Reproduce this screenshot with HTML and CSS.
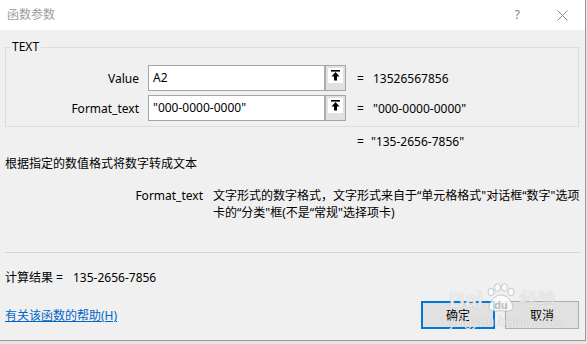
FILE: index.html
```html
<!DOCTYPE html>
<html lang="zh-CN">
<head>
<meta charset="utf-8">
<title>函数参数</title>
<link rel="stylesheet" href="styles.css">
</head>
<body>
<div class="dialog">
  <div class="titlebar">
    <span class="title">函数参数</span>
    <span class="help">?</span>
    <svg class="close" width="11" height="11" viewBox="0 0 11 11"><path d="M0.5 0.5 L10.5 10.5 M10.5 0.5 L0.5 10.5" stroke="#8a8a8a" stroke-width="1" fill="none"/></svg>
  </div>
  <div class="content">
    <fieldset class="group">
      <legend>TEXT</legend>
      <div class="args">
        <label class="arg-label">Value</label>
        <div class="input">
          <span class="input-text">A2</span>
          <span class="pick"><span class="pick-face"><svg width="11" height="11" viewBox="0 0 11 11"><rect x="1" y="0" width="9" height="1.6" fill="#000"/><path d="M5.5 2 L9.5 6.5 L7 6.5 L7 10.5 L4 10.5 L4 6.5 L1.5 6.5 Z" fill="#000"/></svg></span></span>
        </div>
        <span class="eq">=</span>
        <span class="res">13526567856</span>

        <label class="arg-label">Format_text</label>
        <div class="input">
          <span class="input-text">"000-0000-0000"</span>
          <span class="pick"><span class="pick-face"><svg width="11" height="11" viewBox="0 0 11 11"><rect x="1" y="0" width="9" height="1.6" fill="#000"/><path d="M5.5 2 L9.5 6.5 L7 6.5 L7 10.5 L4 10.5 L4 6.5 L1.5 6.5 Z" fill="#000"/></svg></span></span>
        </div>
        <span class="eq">=</span>
        <span class="res">"000-0000-0000"</span>
      </div>
    </fieldset>

    <div class="result-line"><span class="eq">=</span><span class="res">"135-2656-7856"</span></div>

    <p class="desc">根据指定的数值格式将数字转成文本</p>

    <div class="argdesc">
      <span class="argname">Format_text</span>
      <span class="argtext">文字形式的数字格式，文字形式来自于“单元格格式"对话框“数字"选项<br>卡的“分类"框(不是“常规"选择项卡)</span>
    </div>

    <div class="sep"></div>

    <div class="calc">计算结果 =<span class="calc-val">135-2656-7856</span></div>

    <div class="footer">
      <a class="helplink" href="#">有关该函数的帮助(H)</a>
      <div class="buttons">
        <button class="btn btn-primary">确定</button>
        <button class="btn">取消</button>
      </div>
    </div>
  </div>
  <div class="watermark">
    <div class="wm-row">
      <span class="wm-big">Bai</span>
      <svg class="wm-paw" width="30" height="30" viewBox="0 0 30 30">
        <g fill="rgba(255,255,255,0.75)" stroke="rgba(160,160,160,0.55)" stroke-width="1">
          <ellipse cx="5" cy="9" rx="3" ry="3.8"/>
          <ellipse cx="11.5" cy="4.5" rx="3" ry="3.8"/>
          <ellipse cx="18.5" cy="4.5" rx="3" ry="3.8"/>
          <ellipse cx="25" cy="9" rx="3" ry="3.8"/>
          <path d="M15 12 C9 12 3 19 3 24 C3 28 8 29 15 27.5 C22 29 27 28 27 24 C27 19 21 12 15 12 Z"/>
        </g>
        <text x="15" y="26" text-anchor="middle" font-family="Liberation Sans, sans-serif" font-weight="bold" font-size="11" fill="rgba(175,175,175,0.6)">du</text>
      </svg>
      <span class="wm-big wm-cn">经验</span>
    </div>
    <span class="wm-small">jingyan.baidu.com</span>
  </div>
</div>
</body>
</html>
```

FILE: styles.css
```css
html, body {
  margin: 0;
  padding: 0;
}
body {
  width: 587px;
  height: 344px;
  overflow: hidden;
  background: #e4e4e4;
  font-family: "Noto Sans", "Noto Sans CJK SC", sans-serif;
  font-size: 12px;
  color: #000;
}
.dialog {
  position: relative;
  width: 585px;
  height: 340px;
  background: #f0f0f0;
  border-right: 1px solid #9a9a9a;
  border-bottom: 1px solid #9a9a9a;
  display: flex;
  flex-direction: column;
}
.titlebar {
  height: 30px;
  background: #fff;
  display: flex;
  align-items: center;
  padding-left: 7px;
  flex-shrink: 0;
}
.title {
  color: #9c9c9c;
  line-height: 16px;
}
.help {
  margin-left: auto;
  color: #808080;
  font-size: 12px;
  line-height: 16px;
}
.close {
  margin-left: 37px;
  margin-right: 17px;
  display: block;
}
.content {
  padding: 0 6px 0 5px;
  flex: 1;
  display: flex;
  flex-direction: column;
}
.group {
  margin: 9px 0 0 0;
  padding: 10px 0 5px 0;
  border: 1px solid #dcdcdc;
  min-width: 0;
}
.group legend {
  margin-left: 4px;
  padding: 0 2px;
  line-height: 16px;
  font-size: 12px;
}
.args {
  display: grid;
  grid-template-columns: 133px 198px 9px 1fr;
  grid-auto-rows: 26px;
  column-gap: 9px;
  row-gap: 4px;
  align-items: center;
}
.arg-label {
  text-align: right;
  line-height: 17px;
}
.input {
  height: 26px;
  box-sizing: border-box;
  border: 1px solid #a5a5a5;
  background: #fff;
  display: flex;
}
.input-text {
  flex: 1;
  padding-left: 4px;
  line-height: 23px;
  white-space: nowrap;
}
.pick {
  width: 21px;
  box-sizing: border-box;
  border-left: 2px solid #adadad;
  background: #e1e1e1;
  padding: 2px 3px 0 2px;
}
.pick-face {
  display: flex;
  align-items: center;
  justify-content: center;
  width: 15px;
  height: 15px;
  background: #fff;
}
.pick-face svg {
  display: block;
}
.eq {
  padding-left: 2px;
  line-height: 17px;
}
.res {
  line-height: 17px;
  white-space: nowrap;
}
.result-line {
  margin: 6px 0 0 352px;
  display: flex;
  line-height: 17px;
}
.result-line .eq {
  width: 14px;
  padding-left: 0;
}
.desc {
  margin: 5px 0 0 0;
  line-height: 17px;
}
.argdesc {
  margin-top: 15px;
  display: grid;
  grid-template-columns: 198px 1fr;
  column-gap: 10px;
  line-height: 17px;
}
.argname {
  text-align: right;
}
.argtext {
  white-space: nowrap;
}
.sep {
  margin-top: 31px;
  border-top: 1px solid #d5d5d5;
  margin-right: -1px;
}
.calc {
  margin-top: 16px;
  line-height: 17px;
}
.calc-val {
  margin-left: 10px;
}
.footer {
  margin-top: 15px;
  display: flex;
  align-items: center;
}
.helplink {
  color: #0066cc;
  text-decoration: underline;
  line-height: 17px;
  margin-top: 1px;
}
.buttons {
  margin-left: auto;
  display: flex;
  gap: 10px;
}
.btn {
  width: 74px;
  height: 28px;
  box-sizing: border-box;
  background: #e1e1e1;
  border: 1px solid #adadad;
  font-family: "Noto Sans", "Noto Sans CJK SC", sans-serif;
  font-size: 12px;
  color: #000;
  padding: 0;
  margin: 0;
}
.btn-primary {
  border: 2px solid #0078d7;
}
.watermark {
  position: absolute;
  left: 449px;
  top: 283px;
  display: flex;
  flex-direction: column;
  pointer-events: none;
  color: rgba(255, 255, 255, 0.75);
  text-shadow: 0 0 1px rgba(150, 150, 150, 0.7);
  font-family: "Liberation Sans", "Noto Sans CJK SC", sans-serif;
}
.wm-row {
  display: flex;
  align-items: flex-end;
  gap: 3px;
}
.wm-big {
  font-size: 22px;
  line-height: 26px;
  font-weight: bold;
}
.wm-cn {
  font-size: 18px;
  font-weight: normal;
}
.wm-paw {
  display: block;
}
.wm-small {
  font-size: 14px;
  line-height: 16px;
  margin-left: 1px;
}
```
